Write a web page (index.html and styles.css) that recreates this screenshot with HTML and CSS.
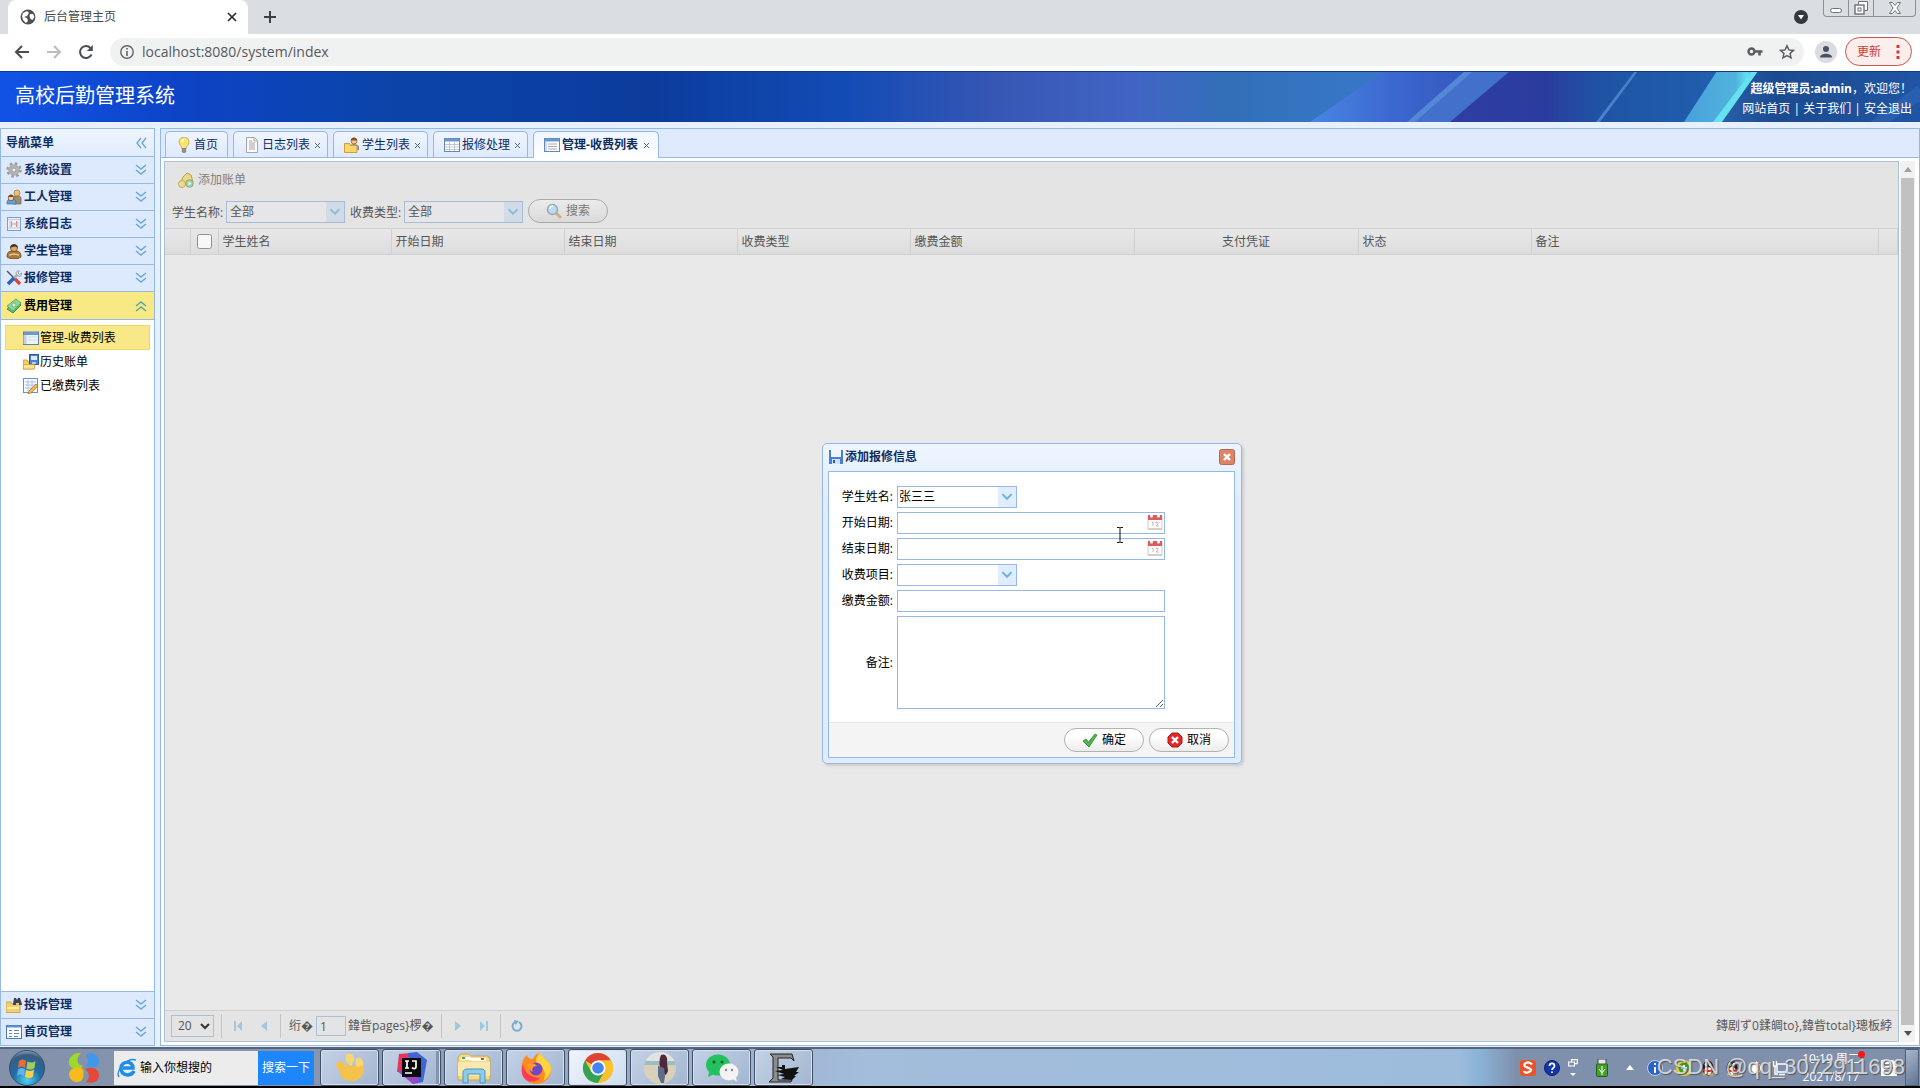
FILE: index.html
```html
<!DOCTYPE html>
<html lang="zh-CN">
<head>
<meta charset="utf-8">
<title>后台管理主页</title>
<link rel="stylesheet" href="styles.css">
</head>
<body>
<svg class="defs" aria-hidden="true">
  <defs>
    <symbol id="down2" viewBox="0 0 12 12"><path d="M1 1l5 4 5-4M1 6l5 4 5-4" fill="none" stroke="#6da7d3" stroke-width="1.5"/></symbol>
    <symbol id="up2" viewBox="0 0 12 12"><path d="M1 6l5-4 5 4M1 11l5-4 5 4" fill="none" stroke="#58a5a0" stroke-width="1.5"/></symbol>
    <symbol id="left2" viewBox="0 0 12 12"><path d="M6 1L2 6l4 5M11 1L7 6l4 5" fill="none" stroke="#6da7d3" stroke-width="1.4"/></symbol>
    <symbol id="chev" viewBox="0 0 10 7"><path d="M1 1l4 4 4-4" fill="none" stroke="#6bb6d6" stroke-width="1.800"/></symbol>
    <symbol id="gear" viewBox="0 0 16 16"><circle cx="8" cy="8" r="6.2" fill="none" stroke="#9a9a9a" stroke-width="3" stroke-dasharray="2.4 2.47"/><circle cx="8" cy="8" r="4.2" fill="none" stroke="#b0b0b0" stroke-width="3"/><circle cx="8" cy="8" r="2.2" fill="#e9efff" stroke="#8a8a8a"/></symbol>
    <symbol id="worker" viewBox="0 0 16 16"><path d="M7 15V9c0-3 8-3 8 0v6z" fill="#9b8f70" stroke="#6c6350" stroke-width=".7"/><circle cx="11" cy="4" r="3" fill="#f0c070" stroke="#a97a2c" stroke-width=".7"/><path d="M1 15v-2c0-4 9-4 9 0v2z" fill="#5fa3de" stroke="#396fa5" stroke-width=".7"/><circle cx="5" cy="9" r="2.8" fill="#f6d3a4" stroke="#7b4a20" stroke-width=".8"/><path d="M2.4 8c0-3.5 5.2-3.5 5.2 0z" fill="#8a4a20"/></symbol>
    <symbol id="log" viewBox="0 0 16 16"><rect x="1.500" y="1.500" width="13" height="13" fill="#edf3fc" stroke="#7d9dcb"/><path d="M2 3.500h12M2 12h12M4 5v7M12 5v7" stroke="#b9cce8"/><path d="M5.500 5v6M10.500 5v6M6 8h4" stroke="#e58a8a" stroke-width="1.200"/></symbol>
    <symbol id="student" viewBox="0 0 16 16"><path d="M1 14c0-6 3-6 7-6s7 0 7 6l-3 1.500H4z" fill="#a9793e" stroke="#6b4a20" stroke-width=".8"/><circle cx="8" cy="5" r="3.500" fill="#dba86c" stroke="#5a3b1a" stroke-width=".7"/><path d="M4.200 5C4 0 12 0 11.800 5c-2-2-5-2-7.600 0z" fill="#443020"/><path d="M3 12l5-1 5 1" stroke="#e8c177" fill="none" stroke-width="1.500"/></symbol>
    <symbol id="tools" viewBox="0 0 16 16"><path d="M1 1l8 8" stroke="#555" stroke-width="1.500"/><path d="M8 8l6 6" stroke="#d84338" stroke-width="3.200"/><path d="M12 4L8 8" stroke="#a9b2bd" stroke-width="2.500"/><path d="M8 8l-6 6" stroke="#2b61c4" stroke-width="3.600"/><path d="M10 3.500c0-3 3-3 3.500-2.500L12 3l1.500 1.500L15.500 3c.5 3-2 4-3.500 3z" fill="#dbe2ea" stroke="#6e7680" stroke-width=".6"/></symbol>
    <symbol id="money" viewBox="0 0 16 16"><path d="M1 11l9-8 5 4-8 8z" fill="#6abb77" stroke="#3f8f50"/><path d="M1 8l9-7 5 4-8 8z" fill="#93d69a" stroke="#4a9e5a" stroke-width=".8"/><circle cx="8" cy="7" r="2" fill="#d6f2d4" stroke="#4a9e5a" stroke-width=".6"/></symbol>
    <symbol id="grid" viewBox="0 0 16 16"><rect x=".5" y="1.500" width="15" height="13" fill="#fff" stroke="#6488b5"/><path d="M1 3h14" stroke="#6d97d2" stroke-width="3"/><path d="M1 7.500h14M1 10h14M1 12.500h14M5.500 5v9M10.500 5v9" stroke="#b3bac4" stroke-width=".8"/></symbol>
    <symbol id="list" viewBox="0 0 16 16"><rect x=".5" y="1.500" width="15" height="13" fill="#fff" stroke="#6488b5"/><path d="M1 3h14" stroke="#6d97d2" stroke-width="3"/><path d="M4 7h9M4 9.500h9M4 12h9" stroke="#a8a8a8"/><path d="M2 5v9" stroke="#c9d9ee" stroke-width="2"/></symbol>
    <symbol id="pane" viewBox="0 0 16 16"><rect x=".5" y="2" width="15" height="12.500" fill="#eef3fb" stroke="#5b82b8"/><path d="M1 3.500h14" stroke="#6d97d2" stroke-width="3"/><path d="M2 5v9" stroke="#bdd1ed" stroke-width="3"/><path d="M5 7h9M5 10h9" stroke="#d5d9df"/></symbol>
    <symbol id="disk" viewBox="0 0 16 16"><path d="M0 6h4l1 2h6v7H0z" fill="#f7ce5d" stroke="#c4902d" stroke-width=".8"/><rect x="6.500" y=".5" width="9" height="10" fill="#4d80cf" stroke="#295aa8"/><path d="M8 2h6v4H8z" fill="#dce9fa"/><path d="M9 8h4v2H9z" fill="#b9cdea"/><path d="M.5 10.500h11v4.500H.5z" fill="#fbe18f" stroke="#c4902d" stroke-width=".6"/></symbol>
    <symbol id="edit" viewBox="0 0 16 16"><rect x=".5" y=".5" width="14" height="14" fill="#f7faff" stroke="#6a91c8"/><path d="M2 4h11M2 7h11M2 10h8M5 2v11M9 2v9" stroke="#aac4e8"/><path d="M6 13l7-7 2 2-7 7-3 1z" fill="#f5b64a" stroke="#a4702a" stroke-width=".7"/></symbol>
    <symbol id="binder" viewBox="0 0 16 16"><path d="M0 5h5l1 2h8v8.500H0z" fill="#f6cf68" stroke="#c89a3a" stroke-width=".8"/><path d="M7 7l1-6h2l1 2 1-2h2l2 6v1h-3V6h-3v2H7z" fill="#3e4550"/><path d="M1 11h12" stroke="#fff0b5" stroke-width="2"/></symbol>
    <symbol id="form" viewBox="0 0 16 16"><rect x=".5" y="1.500" width="15" height="13" fill="#fff" stroke="#4c7bbd"/><path d="M1 2.500h14" stroke="#5b90dc" stroke-width="2"/><path d="M3 6h3v1H3zM8 6h5v1H8zM3 9h3v1H3zM8 9h5v1H8zM3 12h3v1H3zM8 12h4v1H8z" fill="#5c86bd"/></symbol>
    <symbol id="bulb" viewBox="0 0 16 16"><path d="M6 11.500C6 9 3 8 3 5a5 5 0 0 1 10 0c0 3-3 4-3 6.500z" fill="#fbe46a" stroke="#b9a24a" stroke-width=".8"/><path d="M5.500 5c.3-1.500 1.500-2.200 2.700-2.200" stroke="#fff" stroke-width="1.500" fill="none"/><path d="M6.200 11.500h3.600V15L8 16l-1.800-1z" fill="#93928e" stroke="#6f6f6b" stroke-width=".6"/></symbol>
    <symbol id="page" viewBox="0 0 16 16"><path d="M2.500.5h8l3 3v12h-11z" fill="#fafafa" stroke="#a5a5a5"/><path d="M10 1v3h3M5 6h6M5 8h6M5 10h6M5 12h6M5 4h3" stroke="#a5a5a5" fill="none"/></symbol>
    <symbol id="fuser" viewBox="0 0 16 16"><path d="M5 10c0-4 10-4 10 0v3H5z" fill="#7b8ba0"/><circle cx="10" cy="4" r="3" fill="#f0c793" stroke="#8a5a2b" stroke-width=".7"/><path d="M7 3.500c0-4 6-4 6 0z" fill="#8a4f22"/><path d="M.5 6.500h5l1 2H13v7H.5z" fill="#f9d669" stroke="#cf9f35"/></symbol>
    <symbol id="coins" viewBox="0 0 16 16"><path d="M3 10l2-5 4-4 4 2 2 7-5 3z" fill="#e9d986" stroke="#b9a052"/><circle cx="4" cy="12" r="3.500" fill="#f0dc86" stroke="#b9a052" stroke-width=".8"/><circle cx="11.500" cy="11.500" r="3.800" fill="#a5cfa3" stroke="#76a876" stroke-width=".8"/><path d="M10.500 9.500l3 2-3 2z" fill="#f2f7f0"/></symbol>
    <symbol id="lens" viewBox="0 0 16 16"><path d="M10 10l4 4" stroke="#d6ac7c" stroke-width="3" stroke-linecap="round"/><circle cx="6.500" cy="6.500" r="5" fill="#b9dcf2" stroke="#93a9c0" stroke-width="1.500"/><path d="M4 6a3 3 0 0 1 3-3" stroke="#fff" stroke-width="1.500" fill="none"/></symbol>
    <symbol id="cal" viewBox="0 0 16 16"><rect x="1" y="2" width="14" height="13" fill="#fdfafa" stroke="#d5cdcd"/><path d="M1 1h14v5H1z" fill="#d95f5f"/><circle cx="4.500" cy="2" r="1.500" fill="#fff"/><circle cx="11.500" cy="2" r="1.500" fill="#fff"/><path d="M5 9l1-1v4M8.500 8.500h2.500v1.500L9 12h3" stroke="#c6bcbc" fill="none"/><path d="M1 15h14" stroke="#cfc4c4" stroke-width="1.500"/></symbol>
    <symbol id="qq" viewBox="0 0 16 16"><ellipse cx="8" cy="8" rx="5.500" ry="7.500" fill="#161616"/><ellipse cx="8" cy="11" rx="3.700" ry="4" fill="#fff"/><path d="M3 8.500c3 2 7 2 10 0l.5 2c-3 2-8 2-11 0z" fill="#dd2b20"/><ellipse cx="6" cy="4.500" rx="1.300" ry="1.700" fill="#fff"/><ellipse cx="10" cy="4.500" rx="1.300" ry="1.700" fill="#fff"/><path d="M5 7h6l-3 1.500z" fill="#f5a11a"/><path d="M3 14.500h4M9 14.500h4" stroke="#f5a11a" stroke-width="2"/></symbol>
  </defs>
</svg>

<header class="browser">
  <div class="tabstrip">
    <div class="browser-tab">
      <svg width="16" height="16" viewBox="0 0 16 16"><circle cx="8" cy="8" r="7.500" fill="#4d5156"/><path d="M3 4l4-2 2 2-2 3-3 1 3 1 1 3-2 2-3-3-1-4zM10 5l3 0 1.500 3-2 3-2-1-1-3z" fill="#fff"/></svg>
      <span>后台管理主页</span>
      <button class="plain" aria-label="关闭"><svg width="10" height="10" viewBox="0 0 10 10"><path d="M1 1l8 8M9 1L1 9" stroke="#2b2b2b" stroke-width="1.700"/></svg></button>
    </div>
    <button class="plain" aria-label="新标签页"><svg width="14" height="14" viewBox="0 0 14 14"><path d="M7 1v12M1 7h12" stroke="#3c4043" stroke-width="2"/></svg></button>
    <svg class="tab-search" width="14" height="14" viewBox="0 0 14 14"><circle cx="7" cy="7" r="7" fill="#35383d"/><path d="M4 5h6l-3 4.500z" fill="#fff"/></svg>
    <div class="win-controls">
      <button class="plain" aria-label="最小化"><svg width="14" height="14" viewBox="0 0 14 14"><rect x="1.500" y="7.500" width="11" height="4" rx="2" fill="#fff" stroke="#6c7078"/></svg></button>
      <button class="plain" aria-label="还原"><svg width="14" height="14" viewBox="0 0 14 14"><path d="M4.500 3.500v-3h9v9h-3" fill="#fff" stroke="#6c7078"/><rect x="1" y="4" width="9" height="9" fill="#fff" stroke="#6c7078" stroke-width="1.400"/><rect x="4" y="7" width="3" height="3" fill="none" stroke="#6c7078"/></svg></button>
      <button class="plain wide" aria-label="关闭窗口"><svg width="14" height="14" viewBox="0 0 14 14"><path d="M1.500 1.500h3L7 4.500l2.500-3h3L9 7l3.500 5.500h-3L7 9.500l-2.500 3h-3L5 7z" fill="#fff" stroke="#6c7078"/></svg></button>
    </div>
  </div>
  <div class="toolbar">
    <button class="plain" aria-label="后退"><svg width="16" height="16" viewBox="0 0 16 16"><path d="M8 2L2 8l6 6M2 8h13" fill="none" stroke="#4a4d51" stroke-width="2"/></svg></button>
    <button class="plain" aria-label="前进"><svg width="16" height="16" viewBox="0 0 16 16"><path d="M8 2l6 6-6 6M14 8H1" fill="none" stroke="#b9bcc0" stroke-width="2"/></svg></button>
    <button class="plain" aria-label="刷新"><svg width="16" height="16" viewBox="0 0 16 16"><path d="M13.500 10.500A6 6 0 1 1 12.500 4" fill="none" stroke="#4a4d51" stroke-width="2"/><path d="M14.800 1v6h-6z" fill="#4a4d51"/></svg></button>
    <div class="omnibox">
      <svg width="14" height="14" viewBox="0 0 14 14"><circle cx="7" cy="7" r="6.200" fill="none" stroke="#5f6368" stroke-width="1.400"/><path d="M7 6v5M7 3v1.600" stroke="#5f6368" stroke-width="1.600"/></svg>
      <input type="text" aria-label="地址" value="localhost:8080/system/index">
      <svg width="16" height="16" viewBox="0 0 16 16"><circle cx="4.500" cy="7.500" r="3" fill="none" stroke="#5a5d61" stroke-width="2.400"/><path d="M8 7.500h7.500M12.500 7.500v4" stroke="#5a5d61" stroke-width="2.600"/></svg>
      <svg width="16" height="16" viewBox="0 0 16 16"><path d="M8 1.800l1.900 4.100 4.500.5-3.300 3 .9 4.400L8 11.600l-4 2.200.9-4.400-3.300-3 4.500-.5z" fill="none" stroke="#5a5d61" stroke-width="1.500"/></svg>
    </div>
    <svg width="22" height="22" viewBox="0 0 22 22"><circle cx="11" cy="11" r="11" fill="#dadce2"/><circle cx="11" cy="8" r="3" fill="#4a5060"/><path d="M5 16.500c0-5 12-5 12 0z" fill="#4a5060"/></svg>
    <button class="update">更新<svg width="4" height="14" viewBox="0 0 4 14"><path d="M.5 0h3v3h-3zM.5 5.500h3v3h-3zM.5 11h3v3h-3z" fill="#cf3a35"/></svg></button>
  </div>
</header>

<div class="banner">
  <svg class="banner-art" viewBox="0 0 1920 51" preserveAspectRatio="none" aria-hidden="true">
    <defs>
      <linearGradient id="g1"><stop offset="0" stop-color="#1152e6"/><stop offset=".1" stop-color="#0d43c4"/><stop offset=".2" stop-color="#0c44aa"/><stop offset=".34" stop-color="#0b3c9c"/><stop offset=".44" stop-color="#134bb5"/><stop offset=".52" stop-color="#3757b4"/><stop offset=".59" stop-color="#4164c4"/><stop offset=".64" stop-color="#336fb8"/><stop offset=".7" stop-color="#3676c4"/><stop offset="1" stop-color="#3676c4"/></linearGradient>
      <linearGradient id="g2"><stop offset="0" stop-color="#4a86e4"/><stop offset=".5" stop-color="#3b68cf"/><stop offset="1" stop-color="#3556bd"/></linearGradient>
      <linearGradient id="g3"><stop offset="0" stop-color="#2e3ea4"/><stop offset=".35" stop-color="#2b3c9e"/><stop offset=".55" stop-color="#1f53a4"/><stop offset="1" stop-color="#215fae"/></linearGradient>
      <linearGradient id="g4"><stop offset="0" stop-color="#4aa0dc"/><stop offset=".7" stop-color="#4fb4dc"/><stop offset=".85" stop-color="#62e0ec"/><stop offset="1" stop-color="#3c9cd0"/></linearGradient>
      <linearGradient id="g5"><stop offset="0" stop-color="#2862ac"/><stop offset=".3" stop-color="#1c4a90"/><stop offset="1" stop-color="#1f55a4"/></linearGradient>
    </defs>
    <path d="M0 0h1920v51H0z" fill="url(#g1)"/>
    <path d="M1384 0h90l-60 51h-104z" fill="url(#g2)"/>
    <path d="M1465 0h50l-60 51h-47z" fill="#4270ca"/>
    <path d="M1510 0h210l-34 51h-236z" fill="url(#g3)"/>
    <path d="M1465 0h8l-58 51h-8zM1635 0h3l-38 51h-4z" fill="#5b93dc" opacity=".7"/>
    <path d="M1757 0h163v51h-204z" fill="url(#g5)"/>
    <path d="M1717 0h41l-38 51h-36z" fill="url(#g4)"/>
    <path d="M1752 0h6l-36 51h-9z" fill="#66e2ee"/>
    <path d="M1917 15l3 3v12l-30 21h-20z" fill="#2f67b8" opacity=".6"/>
    <path d="M0 0h1920v1H0z" fill="#123a8c"/>
  </svg>
  <h1>高校后勤管理系统</h1>
  <div class="user">
    <p><b>超级管理员:admin</b>，欢迎您！</p>
    <p><a href="#">网站首页</a> | <a href="#">关于我们</a> | <a href="#">安全退出</a></p>
  </div>
</div>

<main class="app">
  <nav class="side">
    <div class="side-title">导航菜单<svg width="12" height="12"><use href="#left2"/></svg></div>
    <button class="acc"><svg width="16" height="16"><use href="#gear"/></svg><span>系统设置</span><svg width="12" height="12"><use href="#down2"/></svg></button>
    <button class="acc"><svg width="16" height="16"><use href="#worker"/></svg><span>工人管理</span><svg width="12" height="12"><use href="#down2"/></svg></button>
    <button class="acc"><svg width="16" height="16"><use href="#log"/></svg><span>系统日志</span><svg width="12" height="12"><use href="#down2"/></svg></button>
    <button class="acc"><svg width="16" height="16"><use href="#student"/></svg><span>学生管理</span><svg width="12" height="12"><use href="#down2"/></svg></button>
    <button class="acc"><svg width="16" height="16"><use href="#tools"/></svg><span>报修管理</span><svg width="12" height="12"><use href="#down2"/></svg></button>
    <button class="acc open"><svg width="16" height="16"><use href="#money"/></svg><span>费用管理</span><svg width="12" height="12"><use href="#up2"/></svg></button>
    <ul class="tree">
      <li><a class="on" href="#"><svg width="16" height="16"><use href="#pane"/></svg>管理-收费列表</a></li>
      <li><a href="#"><svg width="16" height="16"><use href="#disk"/></svg>历史账单</a></li>
      <li><a href="#"><svg width="16" height="16"><use href="#edit"/></svg>已缴费列表</a></li>
    </ul>
    <button class="acc top"><svg width="16" height="16"><use href="#binder"/></svg><span>投诉管理</span><svg width="12" height="12"><use href="#down2"/></svg></button>
    <button class="acc"><svg width="16" height="16"><use href="#form"/></svg><span>首页管理</span><svg width="12" height="12"><use href="#down2"/></svg></button>
  </nav>

  <section class="center">
    <div class="tabs">
      <button class="tab home"><svg width="16" height="16"><use href="#bulb"/></svg>首页</button>
      <button class="tab"><svg width="16" height="16"><use href="#page"/></svg>日志列表<svg class="x" width="7" height="7" viewBox="0 0 7 7"><path d="M1 1l5 5M6 1L1 6" stroke="#4b6793"/></svg></button>
      <button class="tab"><svg width="16" height="16"><use href="#fuser"/></svg>学生列表<svg class="x" width="7" height="7" viewBox="0 0 7 7"><path d="M1 1l5 5M6 1L1 6" stroke="#4b6793"/></svg></button>
      <button class="tab"><svg width="16" height="16"><use href="#grid"/></svg>报修处理<svg class="x" width="7" height="7" viewBox="0 0 7 7"><path d="M1 1l5 5M6 1L1 6" stroke="#4b6793"/></svg></button>
      <button class="tab current"><svg width="16" height="16"><use href="#list"/></svg>管理-收费列表<svg class="x" width="7" height="7" viewBox="0 0 7 7"><path d="M1 1l5 5M6 1L1 6" stroke="#4b6793"/></svg></button>
    </div>
    <div class="content">
      <div class="panel">
        <div class="panel-tools">
          <button class="plain add"><svg width="16" height="16"><use href="#coins"/></svg>添加账单</button>
          <form class="filter">
            <label for="f1">学生名称:</label>
            <span class="combo"><select id="f1"><option>全部</option></select><i><svg width="12" height="8"><use href="#chev"/></svg></i></span>
            <label for="f2">收费类型:</label>
            <span class="combo"><select id="f2"><option>全部</option></select><i><svg width="12" height="8"><use href="#chev"/></svg></i></span>
            <button type="button" class="pill"><svg width="16" height="16"><use href="#lens"/></svg>搜索</button>
          </form>
        </div>
        <table class="grid">
          <colgroup><col class="c-no"><col class="c-ck"><col class="c-m"><col class="c-m"><col class="c-m"><col class="c-m"><col class="c-l"><col class="c-l"><col class="c-m"><col><col class="c-end"></colgroup>
          <thead><tr><td></td><th class="ck"><input type="checkbox" aria-label="全选"></th><th>学生姓名</th><th>开始日期</th><th>结束日期</th><th>收费类型</th><th>缴费金额</th><th class="mid">支付凭证</th><th>状态</th><th>备注</th><td></td></tr></thead>
        </table>
        <div class="rows"></div>
        <div class="pager">
          <span class="size"><select aria-label="每页条数"><option>20</option></select><svg width="10" height="7" viewBox="0 0 10 7"><path d="M1 1l4 4 4-4" fill="none" stroke="#333" stroke-width="2"/></svg></span>
          <i class="sep"></i>
          <button class="plain" aria-label="第一页"><svg width="10" height="10" viewBox="0 0 10 10"><path d="M1 0h2v10H1zM9 0v10L4 5z" fill="#a0c6e0"/></svg></button>
          <button class="plain" aria-label="上一页"><svg width="10" height="10" viewBox="0 0 10 10"><path d="M8 0v10L2 5z" fill="#a0c6e0"/></svg></button>
          <i class="sep"></i>
          <label for="pg">绗�</label><input id="pg" type="text" value="1"><span class="pages">鍏眥pages}椤�</span>
          <i class="sep"></i>
          <button class="plain" aria-label="下一页"><svg width="10" height="10" viewBox="0 0 10 10"><path d="M2 0v10l6-5z" fill="#a0c6e0"/></svg></button>
          <button class="plain" aria-label="最后一页"><svg width="10" height="10" viewBox="0 0 10 10"><path d="M7 0h2v10H7zM1 0v10l5-5z" fill="#a0c6e0"/></svg></button>
          <i class="sep"></i>
          <button class="plain" aria-label="刷新"><svg width="12" height="12" viewBox="0 0 12 12"><path d="M8 2.200A4.500 4.500 0 1 1 4 2.200" fill="none" stroke="#74add4" stroke-width="2"/><path d="M3 0l5 1-3.500 4z" fill="#74add4"/></svg></button>
          <span class="total">鏄剧ず0鍒皗to},鍏眥total}璁板綍</span>
        </div>
      </div>
      <div class="scroll"><svg width="8" height="5" viewBox="0 0 8 5"><path d="M0 5l4-5 4 5z" fill="#a0a0a0"/></svg><div class="thumb"></div><svg width="8" height="5" viewBox="0 0 8 5"><path d="M0 0l4 5 4-5z" fill="#505050"/></svg></div>
    </div>
  </section>

  <div class="dialog" role="dialog" aria-labelledby="dt">
    <div class="dialog-head">
      <svg width="14" height="16" viewBox="0 0 14 16"><path d="M0 1h14v14H0z" fill="#4a7fd8"/><path d="M2 1h10v7H2z" fill="#eef5ff"/><path d="M3 10h8v5H3z" fill="#cfe0f8"/><path d="M4 11h2v3H4z" fill="#2b5cab"/></svg>
      <strong id="dt">添加报修信息</strong>
      <button class="plain" aria-label="关闭"><svg width="16" height="16" viewBox="0 0 16 16"><rect x=".5" y=".5" width="15" height="15" rx="2" fill="#dd8468" stroke="#b9684f"/><path d="M5 5l6 6M11 5l-6 6" stroke="#fff" stroke-width="2.400"/></svg></button>
    </div>
    <form class="dialog-body">
      <div class="fields">
        <label for="a">学生姓名:</label><span class="combo"><select id="a"><option>张三三</option></select><i><svg width="12" height="8"><use href="#chev"/></svg></i></span>
        <label for="b">开始日期:</label><span class="date"><input id="b" type="text"><svg width="16" height="16"><use href="#cal"/></svg></span>
        <label for="c">结束日期:</label><span class="date"><input id="c" type="text"><svg width="16" height="16"><use href="#cal"/></svg></span>
        <label for="d">收费项目:</label><span class="combo"><select id="d"><option></option></select><i><svg width="12" height="8"><use href="#chev"/></svg></i></span>
        <label for="e">缴费金额:</label><span class="date"><input id="e" type="text"></span>
        <label for="f">备注:</label><textarea id="f"></textarea>
      </div>
      <div class="actions">
        <button type="button" class="pill"><svg width="16" height="16" viewBox="0 0 16 16"><path d="M1 9l3-2 2.500 3L13 2l2 1-8 12z" fill="#4fb54a" stroke="#2d8a32" stroke-width=".8"/></svg>确定</button>
        <button type="button" class="pill"><svg width="16" height="16" viewBox="0 0 16 16"><path d="M5 1h6l4 4v6l-4 4H5l-4-4V5z" fill="#e02a2a" stroke="#b31515"/><path d="M5 5l6 6M11 5l-6 6" stroke="#fff" stroke-width="2.300"/></svg>取消</button>
      </div>
    </form>
    <svg class="cursor" width="8" height="16" viewBox="0 0 8 16"><path d="M1 .5h2.500L4 1l.5-.5H7M4 1v14M1 15.500h2.500L4 15l.5.500H7" fill="none" stroke="#111"/></svg>
  </div>
</main>

<footer class="taskbar">
  <svg class="orb" width="38" height="38" viewBox="0 0 38 38"><defs><radialGradient id="o" cx=".5" cy=".85" r=".9"><stop offset="0" stop-color="#4fd0f0"/><stop offset=".45" stop-color="#1f6ca5"/><stop offset=".8" stop-color="#3c5c80"/><stop offset="1" stop-color="#a9c0d6"/></radialGradient></defs><circle cx="19" cy="19" r="17.500" fill="url(#o)" stroke="#31506f"/><path d="M11 12c3-2 5-2 7 0l-1 7c-3-2-5-2-7 0z" fill="#ee6b35"/><path d="M19.500 12.500c3 1.500 5 1.500 8-.5l-1 7c-3 2-5 2-8 .5z" fill="#a5cf4e"/><path d="M10 20.500c3-2 5-2 7 0l-1 6.500c-3-2-5-2-7 0z" fill="#5fb2ee"/><path d="M18 21c3 1.500 5 1.500 8-.5l-1 7c-3 2-5 2-8 0z" fill="#fbcf47"/></svg>
  <svg class="logo4" width="32" height="32" viewBox="0 0 32 32"><path d="M13 1C4 0 0 7 1 12c2 6 11 6 14 2-7-1-7-8-2-13z" fill="#9ed62b"/><path d="M18 3c5-4 13-1 13 6 0 6-7 8-14 5 4-3 3-7 1-11z" fill="#3f98e8"/><path d="M1 22c1-6 8-8 14-5 1 6 1 13-6 13-5 0-8-4-8-8z" fill="#f8bb1c"/><path d="M17 17c7-3 14 0 14 6 0 7-7 9-13 7 4-4 4-9-1-13z" fill="#e3483a"/></svg>
  <form class="search"><svg width="20" height="22" viewBox="0 0 20 22"><path d="M17 14c-3 6-13 5-13-3 0-7 12-8 12 0H6" fill="none" stroke="#1e8de8" stroke-width="3.500"/><path d="M2 20C-2 14 10 0 19 3" fill="none" stroke="#1e8de8" stroke-width="1.500"/></svg><input type="text" aria-label="搜索" value="输入你想搜的"><button type="button">搜索一下</button></form>
  <div class="tasks">
    <button class="task soft" aria-label="应用"><svg width="32" height="32" viewBox="0 0 32 32"><path d="M3 10c3-2 6 1 9 3l4 1c4-1 10 0 14 0 1 7-3 14-10 15C10 30 5 24 6 19c-3-2-5-6-3-9z" fill="#f3c24c"/><path d="M12 3c4-4 9 0 8 6l-3 5c-4-2-6-7-5-11zM23 6c4-2 7 2 6 8l-6 1c-2-3-2-7 0-9z" fill="#f8d673"/></svg></button>
    <button class="task multi" aria-label="IntelliJ IDEA"><svg width="32" height="32" viewBox="0 0 32 32"><path d="M3 2l12-1 4 16L1 20z" fill="#e8335f"/><path d="M12 1l9-1 10 8-4 22-10 2z" fill="#3e64d8"/><path d="M1 19l14-1 9 11-7 3z" fill="#9a46c6"/><path d="M6 6h19v19H6z" fill="#0a0a0a"/><path d="M9 9h4M11 9v7M9 16h4M16 9h4v6c0 2-3 2-4 .5M9 21h7" fill="none" stroke="#fff" stroke-width="1.700"/></svg></button>
    <button class="task" aria-label="资源管理器"><svg width="34" height="32" viewBox="0 0 34 32"><path d="M1 5l3-3h8l2 2h17l2 3v21H1z" fill="#f2d98a" stroke="#c8a850"/><path d="M4 5h10v3H4zM14 6h15v3H14z" fill="#fff"/><path d="M5 5h3v2H5z" fill="#49a747"/><path d="M24 6h3v2h-3z" fill="#d14a3a"/><path d="M1 10h32v14H1z" fill="#f9e9ad"/><path d="M6 31V20c0-2 2-3 4-3h14c3 0 4 1 4 3v11h-5v-9H11v9z" fill="#8ecbe8" stroke="#4b97c3"/></svg></button>
    <button class="task" aria-label="Firefox"><svg width="32" height="32" viewBox="0 0 32 32"><path d="M2 12C3 6 7 3 7 3c0 3 4 4 6 4 1-3 5-6 7-6 1 6 11 6 11 17 0 8-7 14-15 14S-1 24 2 12z" fill="#ff8a1f"/><path d="M20 1c2 6 11 7 11 16 0 5-4 10-8 12 5-8 0-14-6-17-2-4 0-9 3-11z" fill="#ffd43c"/><path d="M3 12c2 13 12 13 17 14-6 6-15 4-17-2-2-3-1-9 0-12z" fill="#fb3b55"/><circle cx="16" cy="17" r="6.500" fill="#6f47c8"/><path d="M8 12c4-2 8 0 9 2-4 0-6 3-4 6-3-1-5-4-5-8z" fill="#ff9a2b"/></svg></button>
    <button class="task active" aria-label="Chrome"><svg width="32" height="32" viewBox="0 0 32 32"><circle cx="16" cy="16" r="15" fill="#fbc02d"/><path d="M16 16L3 8.500a15 15 0 0 1 26 0H16z" fill="#de4335"/><path d="M3 8.500L9.500 20 16 16v15A15 15 0 0 1 3 8.500z" fill="#34a353"/><path d="M16 31l7-11-7-4-6 4 6 4z" fill="#34a353"/><path d="M16 31A15 15 0 0 0 29 8.500H16l6.500 11z" fill="#fbc02d"/><circle cx="16" cy="16" r="7.500" fill="#fff"/><circle cx="16" cy="16" r="5.800" fill="#4585ee"/></svg></button>
    <button class="task" aria-label="应用"><svg width="32" height="32" viewBox="0 0 32 32"><defs><clipPath id="cp"><circle cx="16" cy="16" r="16"/></clipPath></defs><g clip-path="url(#cp)"><path d="M0 0h32v32H0z" fill="#d9d0ba"/><path d="M0 0h32v9H0z" fill="#dfe4e2"/><path d="M0 9h32v4H0z" fill="#9dbcc0"/><path d="M17 3c4-2 7 2 6 7l1 9-2 4-5-3c-2-6-2-13 0-17z" fill="#4a2a3c"/><path d="M14 14l6 2 1 8-1 7h-3l-3-7z" fill="#5d6d8a"/></g></svg></button>
    <button class="task" aria-label="微信"><svg width="34" height="30" viewBox="0 0 34 30"><ellipse cx="13" cy="12" rx="12" ry="10.500" fill="#23c25f"/><path d="M4 19l-1 5 6-3z" fill="#23c25f"/><circle cx="9" cy="9" r="1.600" fill="#135c30"/><circle cx="17" cy="9" r="1.600" fill="#135c30"/><ellipse cx="24" cy="19" rx="9.500" ry="8.500" fill="#f3f3f3"/><path d="M28 26l4 3-1-5z" fill="#f3f3f3"/><circle cx="21" cy="17" r="1.200" fill="#888"/><circle cx="27" cy="17" r="1.200" fill="#888"/></svg></button>
    <button class="task" aria-label="录屏"><svg width="32" height="30" viewBox="0 0 32 30"><path d="M2 1h22l2 7-3-3H10v22h14l-1 2H1l4-4V4z" fill="#8b8d8c" stroke="#222"/><path d="M8 14h6v-2h3v4l14-2-3 5h3l-5 4h2l-4 4-11-1 4-2-8-2 7-1-9-3 8-1z" fill="#111"/></svg></button>
  </div>
  <div class="tray">
    <svg width="16" height="16" viewBox="0 0 16 16"><rect width="16" height="16" rx="3" fill="#e8532a"/><path d="M12 4.500C8-.5 1 5 6 7s7 3 3 5-5-1-5-1" fill="none" stroke="#fff" stroke-width="2.200"/></svg>
    <svg width="16" height="16" viewBox="0 0 16 16"><circle cx="8" cy="8" r="7.500" fill="#1436a8" stroke="#0b1f6c"/><path d="M5.500 6c0-3.500 5-3.500 5 0C10.500 8 8 8 8 10M8 11.500V13" fill="none" stroke="#fff" stroke-width="1.700"/></svg>
    <svg width="10" height="18" viewBox="0 0 10 18"><path d="M3.500 3V.7h5.800v4H7M.7 3h5.800v4H.7z" fill="none" stroke="#fff" stroke-width="1.200"/><path d="M2 14h6l-3 3z" fill="#fff"/></svg>
    <svg class="apart" width="12" height="18" viewBox="0 0 12 18"><path d="M2 0h8v6H2z" fill="#e6e6e6" stroke="#444"/><rect x=".5" y="5" width="11" height="12.500" rx="1" fill="#43a02a" stroke="#226212"/><path d="M6 7v9M3 10l3 4 3-4" fill="none" stroke="#fff"/></svg>
    <svg class="apart" width="8" height="5" viewBox="0 0 8 5"><path d="M0 5l4-5 4 5z" fill="#fff"/></svg>
    <svg class="near" width="16" height="16" viewBox="0 0 16 16"><circle cx="8" cy="8" r="7.500" fill="#2b63c9" stroke="#c1d1ea"/><path d="M8 7v6M8 3v2" stroke="#fff" stroke-width="2"/></svg>
    <svg class="near" width="16" height="16" viewBox="0 0 16 16"><circle cx="8" cy="8" r="8" fill="#e9d32b"/><circle cx="8" cy="8" r="5.500" fill="#3b9d2c"/><path d="M8 5v6M5 8h6" stroke="#fff" stroke-width="2"/></svg>
    <svg width="16" height="16"><use href="#qq"/></svg>
    <svg width="16" height="16"><use href="#qq"/></svg>
    <svg width="16" height="16" viewBox="0 0 16 16"><path d="M1 5h3l5-4v14l-5-4H1z" fill="#fff"/><path d="M11 4c2 2 2 6 0 8" stroke="#fff" fill="none"/></svg>
    <svg width="16" height="16" viewBox="0 0 16 16"><path d="M5 4h10v8H5zM7 14.500h6M1.500 1v5h3V1M3 6v8h3" fill="none" stroke="#fff" stroke-width="1.400"/></svg>
    <div class="clock"><span>10:19 周二</span><span>2021/8/17</span><b class="dot"></b></div>
    <svg class="apart" width="16" height="18" viewBox="0 0 16 18"><path d="M0 1h12l4 3v13H0z" fill="#fff"/><path d="M3 6h6M3 9h9M3 12h7M9 4v10" stroke="#59647a" stroke-width="1.300"/></svg>
    <div class="desk"></div>
    <div class="mark">CSDN @qq_3072911698</div>
  </div>
</footer>
</body>
</html>
```
FILE: styles.css
```css
* { box-sizing: border-box; }
body {
  margin: 0;
  min-height: 100vh;
  display: flex;
  flex-direction: column;
  background: #e6f0ff;
  color: #000;
  font: 12px/16px "Open Sans", "Noto Sans CJK SC", sans-serif;
}
button, input, select, textarea { font: inherit; color: inherit; border-radius: 0; margin: 0; }
svg { display: block; flex: none; }
h1, p, ul { margin: 0; padding: 0; font-weight: normal; }
a { color: inherit; text-decoration: none; }
i { font-style: normal; }
.defs { position: absolute; width: 0; height: 0; }
.plain { border: 0; padding: 0; background: none; display: flex; align-items: center; }

/* browser frame */
.tabstrip { display: flex; align-items: center; height: 34px; background: #dadde2; padding: 0 4px 0 8px; }
.browser-tab {
  display: flex; align-items: center; gap: 8px;
  width: 240px; height: 34px; padding: 0 11px 0 12px;
  margin-right: 15px;
  background: #fff; border-radius: 8px 8px 0 0;
  color: #45484c;
}
.browser-tab span { flex: 1; }
.tab-search { margin: 0 15px 0 auto; }
.win-controls {
  display: flex; align-self: flex-start; height: 17px;
  border: 1px solid #8d9096; border-top: 0; border-radius: 0 0 4px 4px;
}
.win-controls .plain { width: 25px; justify-content: center; border-right: 1px solid #8d9096; }
.win-controls .wide { width: 41px; border-right: 0; }
.toolbar { display: flex; align-items: center; gap: 16px; height: 37px; padding: 0 8px 2px 14px; background: #fff; }
.toolbar .update { margin-left: -8px; }
.omnibox {
  flex: 1; display: flex; align-items: center; gap: 16px;
  height: 28px; padding: 0 9px 0 10px; margin-right: -5px;
  background: #f0f2f2; border-radius: 14px;
}
.omnibox input {
  flex: 1; min-width: 0; padding: 0; margin-left: -8px;
  border: 0; background: none; color: #55585c; font-size: 14px; line-height: 20px;
}
.update {
  display: flex; align-items: center; gap: 15px;
  height: 29px; padding: 0 11px;
  border: 1px solid #c75650; border-radius: 15px;
  background: #fceeec; color: #cf3a35;
}

/* banner */
.banner {
  position: relative; display: flex; align-items: center; justify-content: space-between;
  height: 51px; padding: 0 8px 0 15px; color: #fff; background: #0c44aa;
}
.banner-art { position: absolute; inset: 0; width: 100%; height: 100%; }
.banner h1 { position: relative; font-size: 20px; line-height: 28px; padding-bottom: 2px; }
.user { position: relative; text-align: right; line-height: 20px; padding-top: 4px; }

/* layout */
.app { position: relative; flex: 1; display: flex; gap: 5px; padding: 6px 0 1px; }
.side {
  width: 155px; display: flex; flex-direction: column;
  border: 1px solid #95b8e7; background: #fff;
}
.side-title, .acc {
  display: flex; align-items: center; height: 27px; padding: 0 7px 0 5px;
  color: #0e2d5f; font-weight: bold; text-align: left;
  border: 0; border-bottom: 1px solid #95b8e7;
}
.side-title { justify-content: space-between; height: 28px; background: linear-gradient(#eff5ff, #e0ecff); }
.acc { gap: 2px; background: #dde9fd; }
.acc span { flex: 1; }
.acc.open { height: 28px; background: #f8e985; color: #000; }
.acc.top { border-top: 1px solid #95b8e7; height: 28px; }
.acc:last-child { border-bottom: 0; height: 26px; }
.tree { flex: 1; list-style: none; padding: 5px 4px; }
.tree a { display: flex; align-items: center; gap: 1px; height: 24px; padding-left: 17px; border: 1px solid transparent; }
.tree a.on { height: 25px; background: #f8e888; border-color: #f0d860; }
.center { flex: 1; min-width: 0; display: flex; flex-direction: column; border: 1px solid #95b8e7; background: #fff; }
.tabs {
  display: flex; gap: 5px; align-items: flex-end; height: 29px; padding-left: 4px;
  background: #dfeafe; border-bottom: 1px solid #95b8e7;
}
.tab {
  display: flex; align-items: center; gap: 2px; height: 26px; padding: 0 8px 0 10px;
  color: #0e2d5f; border: 1px solid #95b8e7; border-bottom: 0; border-radius: 5px 5px 0 0;
  background: linear-gradient(#eff5ff, #dfeaff);
}
.tab.home { padding-right: 9px; }
.tab .x { margin: 1px -2px 0 2px; }
.tab.current { height: 27px; margin-bottom: -1px; padding-right: 10px; font-weight: bold; background: linear-gradient(#eff5ff, #fff); }
.tab.current .x { margin-left: 3px; }
.content { flex: 1; display: flex; padding: 3px 4px 3px 3px; }
.panel { flex: 1; min-width: 0; display: flex; flex-direction: column; border: 1px solid #a9c0d8; background: #e4e4e4; color: #555; }

/* toolbar and filter */
.panel-tools { height: 66px; padding: 9px 6px 0 7px; }
.add { gap: 4px; padding-left: 6px; color: #808080; line-height: 18px; }
.filter { display: flex; align-items: flex-end; margin-top: 10px; }
.filter label { width: 54px; line-height: 20px; }
.filter .combo + label { margin-left: 5px; }
.combo { display: flex; position: relative; width: 120px; height: 22px; }
.combo select {
  appearance: none; width: 100%; padding: 0 20px 0 1px; background: #fff;
  border: 1px solid #95b8e7; line-height: 18px;
}
.combo i {
  position: absolute; right: 1px; top: 1px; width: 18px; height: 20px;
  display: grid; place-items: center; background: #e0ecff; pointer-events: none;
}
.filter .combo { width: 119px; }
.filter select { padding-left: 3px; background: #e6e6e8; border-color: #a7bcd8; }
.filter .combo i { background: #d3dbe6; }
.filter .combo svg { opacity: .7; }
.pill {
  display: flex; align-items: center; justify-content: center; gap: 4px;
  width: 80px; height: 24px; padding: 0;
  border: 1px solid #b2b2b2; border-radius: 12px;
  background: linear-gradient(#fff 30%, #ececec);
}
.filter .pill { margin-left: 5px; color: #777; background: linear-gradient(#ebebeb, #dadada); border-color: #aaa; }

/* data grid */
.grid { width: 100%; table-layout: fixed; border-collapse: collapse; background: linear-gradient(#e8e8e8, #dcdcdc); }
.grid tr { height: 26px; }
.grid th, .grid td {
  padding: 0 4px; font-weight: normal; text-align: left;
  border: 1px solid #d0d0d0; border-left: 0;
}
.grid th.mid { text-align: center; }
.grid th.ck { padding: 0 6px; }
.ck input { display: block; width: 15px; height: 15px; opacity: .75; }
.c-no { width: 25px; } .c-ck { width: 28px; } .c-m { width: 173px; } .c-l { width: 224px; } .c-end { width: 19px; }
.rows { flex: 1; background: #e9e9e9; }
.pager { display: flex; align-items: center; height: 31px; padding: 0 6px; border-top: 1px solid #d0d0d0; }
.size { display: flex; position: relative; width: 43px; height: 22px; margin-right: 4px; }
.size select { appearance: none; width: 100%; padding: 0 6px; background: none; border: 1px solid #a9c0d8; }
.size svg { position: absolute; right: 4px; top: 8px; }
.pager .plain { width: 26px; height: 22px; justify-content: center; }
.sep { width: 1px; height: 24px; margin: 0 3px; background: #c4c4c4; }
.pager label { margin-left: 5px; }
.pager input { width: 30px; height: 20px; margin: 0 2px 0 3px; padding: 0 3px; background: none; border: 1px solid #a9c0d8; }
.pages { margin-right: 4px; }
.total { margin-left: auto; }
.scroll { width: 15px; margin-left: 1px; display: flex; flex-direction: column; align-items: center; gap: 6px; padding: 6px 0; background: #f1f1f1; }
.thumb { flex: 1; width: 13px; background: #c1c1c1; }

/* dialog */
.dialog {
  position: absolute; left: 822px; top: 321px; width: 420px; padding: 0 6px 5px 5px;
  border: 1px solid #95b8e7; border-radius: 5px;
  background: linear-gradient(#eef5ff, #e0ecff 60px); box-shadow: 2px 2px 3px #ccc;
}
.dialog-head { display: flex; align-items: center; gap: 2px; height: 27px; padding: 0 0 2px 1px; color: #0e2d5f; }
.dialog-head strong { flex: 1; }
.dialog-body { border: 1px solid #95b8e7; background: #fff; }
.fields {
  display: grid; grid-template-columns: 64px 268px; column-gap: 4px; row-gap: 4px;
  align-items: center; padding: 14px 0 13px;
}
.fields label { text-align: right; }
.date { position: relative; display: flex; height: 22px; }
.date input { width: 100%; border: 1px solid #95b8e7; padding: 0 20px 0 3px; }
.date svg { position: absolute; right: 2px; top: 2px; }
.fields textarea { display: block; width: 268px; height: 93px; border: 1px solid #95b8e7; resize: both; }
.actions { display: flex; justify-content: flex-end; gap: 5px; padding: 5px; border-top: 1px solid #e6e6e6; background: #f4f4f4; }
.cursor { position: absolute; left: 293px; top: 83px; }

/* taskbar */
.taskbar {
  display: flex; align-items: center; height: 41px; padding-left: 8px;
  border-top: 2px solid #55657c; border-bottom: 2px solid #000;
  background: linear-gradient(90deg, #8391aa, #8796b0 17%, #9fb4d0 40%, #a3bddb 45%, #9dbcdc 76%, #8ab3d8 77%, #7f90ad 79%, #8090ab);
}
.logo4 { margin-left: 22px; }
.search { display: flex; align-items: center; height: 34px; margin-left: 14px; padding-left: 3px; background: #ececec; }
.search input { width: 118px; padding: 0; margin-left: 3px; border: 0; background: none; }
.search button { width: 56px; height: 34px; padding: 0; border: 0; background: #1e86fb; color: #fff; }
.tasks { display: flex; gap: 3px; margin-left: 6px; }
.task {
  display: grid; place-items: center; width: 59px; height: 37px; padding: 0;
  border: 1px solid #3f4f66; border-radius: 3px;
  background: linear-gradient(135deg, #c4d2e6, #a3b5d0); box-shadow: inset 0 0 0 1px #d5e0ee;
}
.task.active { background: linear-gradient(135deg, #f1f5fb, #cddcef); }
.task.multi { box-shadow: inset 0 0 0 1px #d5e0ee, inset -4px 0 0 #8494ae; }
.tray { position: relative; display: flex; align-items: center; height: 37px; margin-left: auto; padding-right: 1px; gap: 8px; color: #fff; }
.tray .apart { margin-left: 10px; }
.tray .near { margin-left: 5px; }
.clock { position: relative; display: flex; flex-direction: column; width: 64px; margin-left: 3px; text-align: center; line-height: 18px; }
.dot { position: absolute; right: -2px; top: 1px; width: 7px; height: 7px; border-radius: 50%; background: #f01818; }
.desk { width: 14px; height: 37px; border: 1px solid #4e6078; background: linear-gradient(135deg, #a9b8cc, #5e7290); }
.mark {
  position: absolute; right: 15px; top: 3px; font: 22px/30px "Liberation Sans", sans-serif;
  color: rgba(235, 238, 242, .8); text-shadow: 1px 1px 1px #555; white-space: nowrap;
}
```
